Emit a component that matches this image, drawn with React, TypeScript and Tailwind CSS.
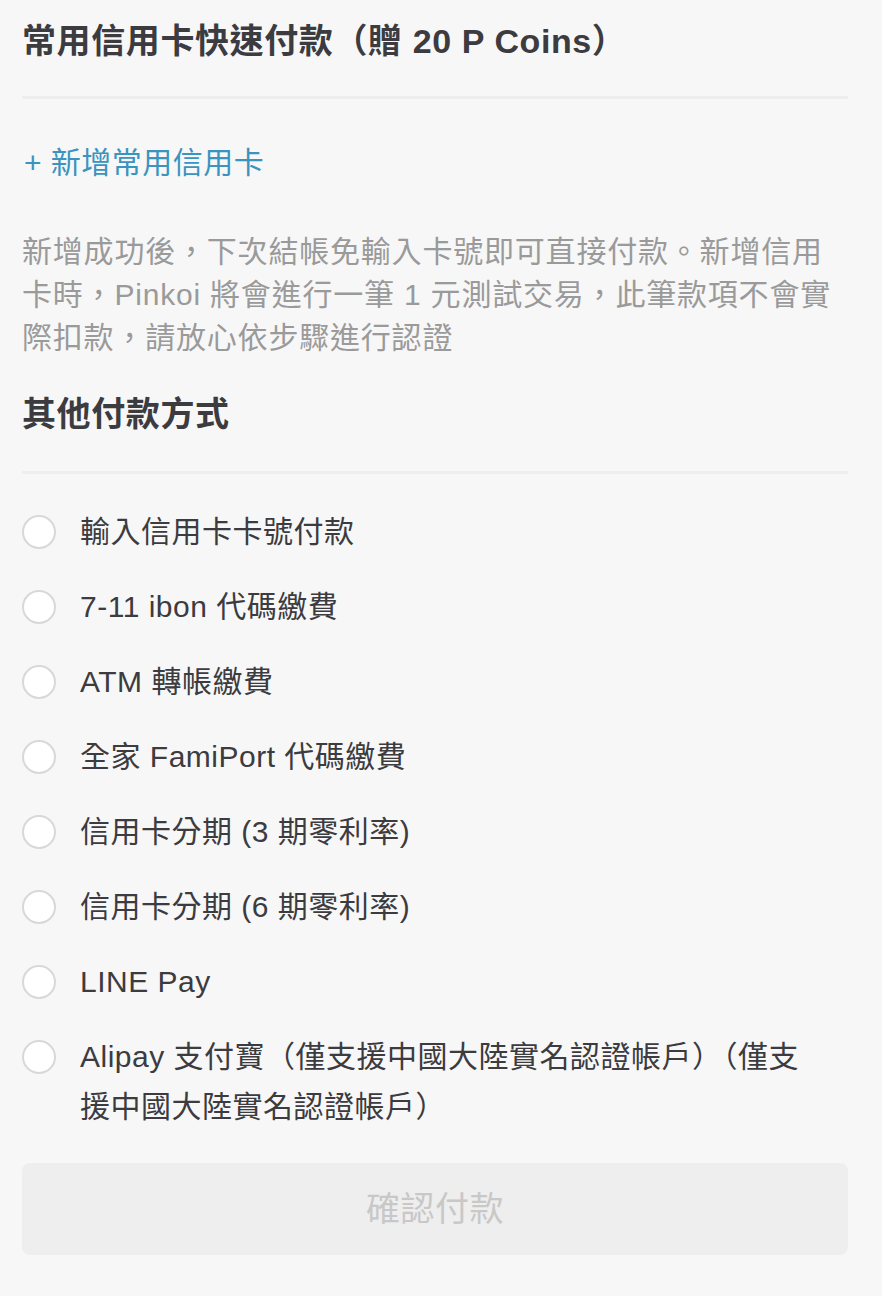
import React from "react";

const font = { fontFamily: '"Liberation Sans", "Noto Sans CJK TC", sans-serif' };

const options = [
  "輸入信用卡卡號付款",
  "7-11 ibon 代碼繳費",
  "ATM 轉帳繳費",
  "全家 FamiPort 代碼繳費",
  "信用卡分期 (3 期零利率)",
  "信用卡分期 (6 期零利率)",
  "LINE Pay",
  "Alipay 支付寶（僅支援中國大陸實名認證帳戶）（僅支援中國大陸實名認證帳戶）",
];

export default function App() {
  return (
    <div
      className="min-h-[1296px] w-full bg-[#f7f7f7] pl-[22px] pr-[34px] pt-[17px] pb-[42px]"
      style={font}
    >
      <h2 className="text-[34px] leading-[48px] font-bold tracking-[0.6px] text-[#3b3b40]">
        常用信用卡快速付款（贈 20 P Coins）
      </h2>
      <div className="mt-[31px] h-[3px] bg-[#eeeeee]" />
      <div className="mt-[40px] pl-[2px] text-[30px] leading-[48px] tracking-[0.5px] text-[#3a94bf]">
        + 新增常用信用卡
      </div>
      <p className="mt-[43px] text-[30px] leading-[43px] tracking-[0.8px] text-[#9a9a9a]">
        新增成功後，下次結帳免輸入卡號即可直接付款。新增信用卡時，Pinkoi 將會進行一筆 1 元測試交易，此筆款項不會實際扣款，請放心依步驟進行認證
      </p>
      <h2 className="mt-[31px] text-[34px] leading-[48px] font-bold tracking-[0.6px] text-[#3b3b40]">
        其他付款方式
      </h2>
      <div className="mt-[33px] h-[3px] bg-[#eeeeee]" />
      <div className="mt-[33px] flex flex-col gap-[25px]">
        {options.map((o) => (
          <label key={o} className="flex items-start gap-[24px]">
            <span className="mt-[8px] h-[34px] w-[34px] shrink-0 rounded-full border-2 border-[#d8d8d8] bg-white" />
            <span className="max-w-[740px] text-[30px] leading-[50px] tracking-[0.5px] text-[#3b3b40]">{o}</span>
          </label>
        ))}
      </div>
      <button className="mt-[31px] flex h-[92px] w-full items-center justify-center rounded-[8px] bg-[#eeeeee] text-[34px] tracking-[0.5px] text-[#c8c8c8]">
        確認付款
      </button>
    </div>
  );
}
